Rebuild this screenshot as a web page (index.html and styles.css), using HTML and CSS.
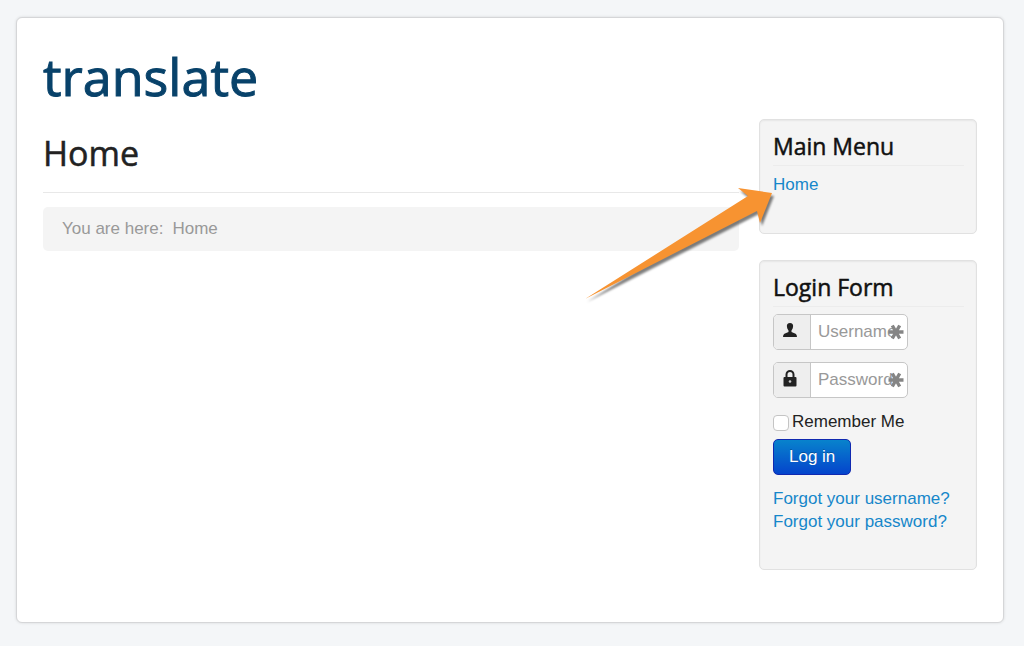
FILE: index.html
```html
<!DOCTYPE html>
<html lang="en">
<head>
<meta charset="utf-8">
<meta name="viewport" content="width=device-width, initial-scale=1">
<title>Home</title>
<link rel="stylesheet" href="styles.css">
</head>
<body>
<div class="page">
  <header class="site-header"><span class="site-title">translate</span></header>
  <div class="columns">
    <main class="content">
      <h1 class="page-title">Home</h1>
      <nav class="breadcrumb" aria-label="Breadcrumb"><span>You are here:</span><span>Home</span></nav>
    </main>
    <aside class="sidebar">
      <section class="well">
        <h2 class="well-title">Main Menu</h2>
        <nav><a class="link" href="#">Home</a></nav>
      </section>
      <section class="well">
        <h2 class="well-title">Login Form</h2>
        <form class="login">
          <div class="field">
            <label class="addon" for="username" aria-label="Username">
              <svg width="16" height="16" viewBox="0 0 16 16"><path fill="#222" d="M8 1C5.700 1 4.700 2.400 4.900 4.300C5 6.200 5.700 7.500 6.500 8.400V10L2.400 11.800Q1 12.500 1 15H15Q15 12.500 13.600 11.800L9.500 10V8.400C10.300 7.500 11 6.200 11.100 4.300C11.300 2.400 10.300 1 8 1Z"/></svg>
            </label>
            <input class="text-input" id="username" type="text" placeholder="Username">
            <svg class="key-mark" width="16" height="16" viewBox="0 0 16 16"><path stroke="#858585" stroke-width="3.400" d="M0.500 8H15.500M4.300 1.500L11.700 14.500M11.700 1.500L4.300 14.500"/></svg>
          </div>
          <div class="field">
            <label class="addon" for="password" aria-label="Password">
              <svg width="16" height="18" viewBox="0 0 16 18"><path fill="none" stroke="#222" stroke-width="2" d="M4.500 8V4.500a3.500 3.500 0 0 1 7 0V8"/><rect x="1.500" y="7" width="13" height="9.500" rx="1" fill="#222"/><circle cx="8" cy="11.500" r="1.300" fill="#ccc"/></svg>
            </label>
            <input class="text-input" id="password" type="password" placeholder="Password">
            <svg class="key-mark" width="16" height="16" viewBox="0 0 16 16"><path stroke="#858585" stroke-width="3.400" d="M0.500 8H15.500M4.300 1.500L11.700 14.500M11.700 1.500L4.300 14.500"/></svg>
          </div>
          <div class="remember">
            <input class="checkbox" id="remember" type="checkbox">
            <label for="remember">Remember Me</label>
          </div>
          <button class="button" type="button">Log in</button>
          <ul class="help-links">
            <li><a class="link" href="#">Forgot your username?</a></li>
            <li><a class="link" href="#">Forgot your password?</a></li>
          </ul>
        </form>
      </section>
      <svg class="arrow" width="200" height="124" viewBox="0 0 200 124" aria-hidden="true"><path fill="#f79331" d="M4 114L167 11L157 3L191 8L179 38L176 26Z"/></svg>
    </aside>
  </div>
</div>
</body>
</html>
```

FILE: styles.css
```css
* {
  box-sizing: border-box;
}

body {
  margin: 0;
  padding: 17px 20px 22px 16px;
  background: #f4f6f8;
  color: #222;
  font: 17px/24px "Liberation Sans", Arial, sans-serif;
}

.page {
  padding: 25px 26px 52px;
  background: #fff;
  border: 1px solid #d5d6d8;
  border-radius: 6px;
  box-shadow: 0 0 3px rgba(0, 0, 0, 0.12);
}

.site-header {
  padding-bottom: 10px;
}

.site-title {
  display: block;
  color: #08426a;
  font: 500 52px/66px "Open Sans", sans-serif;
  -webkit-text-stroke: 1px #08426a;
}

.columns {
  display: flex;
  gap: 20px;
}

.content {
  flex: 1;
  min-width: 0;
}

.page-title {
  margin: 0 0 14px;
  padding: 12px 0 17px;
  border-bottom: 1px solid #e8e8e8;
  font: 500 34px/44px "Open Sans", sans-serif;
  -webkit-text-stroke: 0.5px #222;
}

.breadcrumb {
  display: flex;
  gap: 9px;
  padding: 10px 19px;
  background: #f4f4f4;
  border-radius: 5px;
  color: #999;
}

.sidebar {
  position: relative;
  display: flex;
  flex-direction: column;
  gap: 26px;
  width: 218px;
}

.well {
  padding: 11px 12px 36px 13px;
  background: #f4f4f4;
  border: 1px solid #e1e1e1;
  border-radius: 5px;
  box-shadow: inset 0 1px 2px rgba(0, 0, 0, 0.06);
}

.well-title {
  margin: 0 0 7px;
  padding-bottom: 4px;
  border-bottom: 1px solid #ececec;
  color: #111;
  font: 500 23px/30px "Open Sans", sans-serif;
  -webkit-text-stroke: 0.5px #111;
}

.link {
  color: #1687ca;
  text-decoration: none;
}

.login {
  display: flex;
  flex-direction: column;
  align-items: flex-start;
}

.field {
  position: relative;
  display: flex;
  width: 135px;
  height: 36px;
  margin-bottom: 12px;
  overflow: hidden;
  background: #fff;
  border: 1px solid #c6c6c6;
  border-radius: 5px;
}

.addon {
  display: flex;
  flex: none;
  justify-content: center;
  width: 37px;
  padding: 7px 4px 0 0;
  background: #eee;
  border-right: 1px solid #c6c6c6;
}

.text-input {
  flex: 1;
  min-width: 0;
  padding: 0 8px 0 7px;
  background: transparent;
  border: 0;
  color: #555;
  font: inherit;
}

.text-input::placeholder {
  color: #999;
}

.key-mark {
  position: absolute;
  top: 9px;
  right: 3px;
}

.remember {
  display: flex;
  gap: 3px;
  align-items: center;
  margin-bottom: 5px;
}

.checkbox {
  appearance: none;
  width: 16px;
  height: 16px;
  margin: 2px 0 0;
  background: #fff;
  border: 1px solid #c4c4c4;
  border-radius: 4px;
}

.checkbox:checked {
  background: #1687ca;
}

.button {
  height: 36px;
  padding: 0 15px;
  background: linear-gradient(#0883cc, #0444cc);
  border: 1px solid #1029b0;
  border-radius: 5px;
  color: #fff;
  font: inherit;
  text-shadow: 0 -1px 0 rgba(0, 0, 0, 0.25);
}

.help-links {
  margin: 12px 0 0;
  padding: 0;
  line-height: 23px;
  list-style: none;
}

.arrow {
  position: absolute;
  top: 66px;
  left: -178px;
  filter: drop-shadow(2px 3px 1px rgba(0, 0, 0, 0.5));
  pointer-events: none;
}
```
